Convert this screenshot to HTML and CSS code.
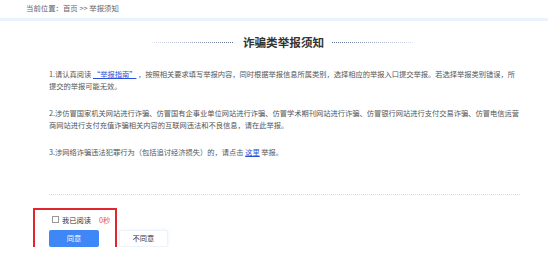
FILE: index.html
```html
<!DOCTYPE html>
<html lang="zh-CN">

<head>
  <meta charset="UTF-8">
  <meta name="viewport" content="width=device-width, initial-scale=1.0">
  <title>举报须知</title>
  <link rel="stylesheet" href="styles.css">
</head>

<body>
  <!-- Breadcrumb -->
  <div class="crumb">当前位置：首页 &gt;&gt; 举报须知</div>

  <div class="main">
    <!-- Title with dotted rules on both sides -->
    <div class="title-row">
      <span class="rule rule-left"></span>
      <h2>诈骗类举报须知</h2>
      <span class="rule rule-right"></span>
    </div>

    <div class="notice">
      <p>1.请认真阅读 <a href="#">“举报指南”</a> ，按照相关要求填写举报内容，同时根据举报信息所属类别，选择相应的举报入口提交举报。若选择举报类别错误，所提交的举报可能无效。</p>
      <p>2.涉仿冒国家机关网站进行诈骗、仿冒国有企事业单位网站进行诈骗、仿冒学术期刊网站进行诈骗、仿冒银行网站进行支付交易诈骗、仿冒电信运营商网站进行支付充值诈骗相关内容的互联网违法和不良信息，请在此举报。</p>
      <p>3.涉网络诈骗违法犯罪行为（包括追讨经济损失）的，请点击 <a href="#">这里</a> 举报。</p>
    </div>

    <div class="agree">
      <label class="read"><span class="box"></span>我已阅读<span class="count">0秒</span></label>
      <div class="btns">
        <button class="btn btn-ok">同意</button>
        <button class="btn btn-no">不同意</button>
      </div>
      <!-- red highlight frame -->
      <div class="mark"></div>
    </div>
  </div>
</body>

</html>
```

FILE: styles.css
```css
body,
html {
  margin: 0;
  padding: 0;
  font-family: "Noto Sans CJK SC", "Noto Sans", sans-serif;
  background: #fff;
  text-spacing-trim: space-all;
}

/* Breadcrumb bar */
.crumb {
  height: 18px;
  padding-left: 26px;
  font-size: 7.4px;
  line-height: 15px;
  color: #666;
  border-bottom: 3px solid #eaf2fc;
}

.main {
  width: 472px;
  margin-left: 49px;
}

/* Title */
.title-row {
  display: flex;
  justify-content: center;
  align-items: center;
  margin-top: 10px;
  height: 22px;
  padding-right: 4px;
}

.title-row h2 {
  margin: 0 8px 0 9px;
  font-size: 11.6px;
  line-height: 22px;
  color: #333;
  font-weight: bold;
}

/* dotted rule, fading towards the outer end */
.rule {
  width: 82px;
  height: 1px;
}

.rule-left {
  background: repeating-linear-gradient(to right, transparent 0 1px, #fff 1px 2px),
    linear-gradient(to right, #dfe4ee, #5d6c90);
}

.rule-right {
  background: repeating-linear-gradient(to right, transparent 0 1px, #fff 1px 2px),
    linear-gradient(to right, #5d6c90, #dfe4ee);
}

/* Notice text */
.notice {
  width: 471px;
  padding-top: 16px;
  padding-bottom: 35px;
  border-bottom: 1px dotted #c9dcf1;
}

.notice p {
  margin: 0 0 16px;
  font-size: 7.25px;
  line-height: 11.5px;
  color: #555;
}

.notice p:last-child {
  margin-bottom: 0;
}

.notice a {
  color: #2a4fd8;
  text-decoration: underline;
}

/* Agree section */
.agree {
  position: relative;
  padding-top: 18px;
}

.read {
  display: flex;
  align-items: center;
  padding-left: 3px;
  height: 14px;
  font-size: 7.25px;
  color: #333;
}

.box {
  width: 5px;
  height: 5px;
  border: 1px solid #999;
  margin-right: 3px;
}

.count {
  margin-left: 8px;
  color: #e0524a;
}

.btns {
  display: flex;
  gap: 20px;
  margin-top: 3px;
}

.btn {
  height: 17px;
  padding: 0;
  font-family: inherit;
  font-size: 7.25px;
  border-radius: 2px;
  cursor: pointer;
}

.btn-ok {
  width: 50px;
  background: #3f86f6;
  color: #fff;
  border: none;
}

.btn-no {
  width: 49px;
  background: #fff;
  color: #333;
  border: 1px solid #edf3fb;
  box-shadow: 0 0 3px rgba(80, 140, 220, 0.15);
}

.mark {
  position: absolute;
  left: -16px;
  top: 13px;
  width: 80px;
  height: 45px;
  border: 2px solid #e0262e;
}
```
